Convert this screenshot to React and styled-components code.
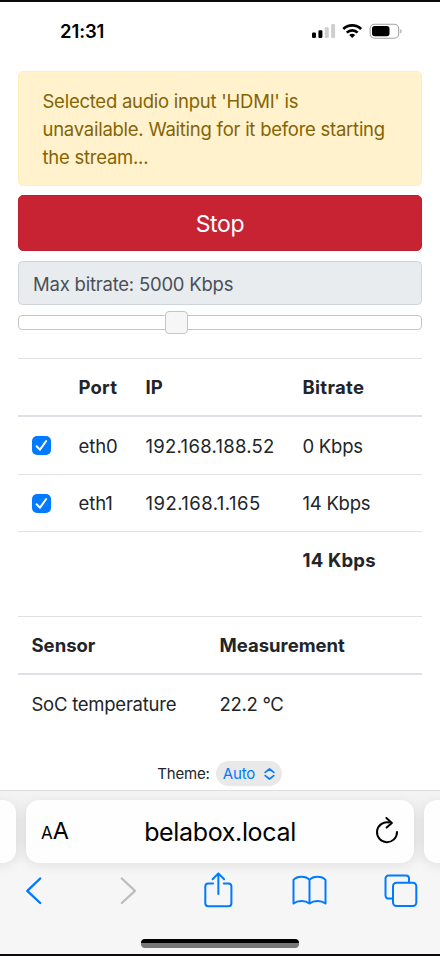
import React, { useState } from 'react'
import styled, { createGlobalStyle } from 'styled-components'

const GlobalStyle = createGlobalStyle`
    * {
        box-sizing: border-box;
    }

    body {
        margin: 0;
        background: #ffffff;
        color: #212529;
        font-family: Inter, "Liberation Sans", sans-serif;
        font-size: 18.5px;
        line-height: 28px;
    }
`

const Phone = styled.div`
    display: flex;
    flex-direction: column;
    width: 440px;
    height: 956px;
    overflow: hidden;
    background: #ffffff;
    border-top: 2px solid #0c0a0b;
    border-bottom: 2px solid #0c0a0b;
    white-space: nowrap;
`

const StatusBar = styled.header`
    display: flex;
    justify-content: space-between;
    align-items: flex-start;
    height: 69px;
    padding: 15px 37px 0 60px;
`

const Clock = styled.time`
    color: #000;
    font-size: 18.5px;
    font-weight: 600;
    letter-spacing: -0.1px;
`

const StatusIcons = styled.svg`
    display: block;
    width: 92px;
    height: 20px;
    margin-top: 5px;
`

const Page = styled.main`
    display: flex;
    flex-direction: column;
    height: 719px;
    padding: 0 18px;
`

const Alert = styled.div`
    height: 115px;
    padding: 15px 23.5px;
    background: #fff2cd;
    border: 1px solid #ffeeba;
    border-radius: 5px;
    color: #856404;
    letter-spacing: -0.25px;
    white-space: pre-line;
`

const StopButton = styled.button`
    height: 56px;
    margin-top: 9px;
    padding: 2px 0 0;
    background: #c82333;
    border: 1px solid #bd2130;
    border-radius: 5px;
    color: #ffffff;
    font: inherit;
    font-size: 23px;
    letter-spacing: -0.3px;
`

const BitrateField = styled.div`
    height: 44px;
    margin-top: 10px;
    padding: 8px 14px 6px;
    background: #e9ecef;
    border: 1px solid #ced4da;
    border-radius: 4.5px;
    color: #495057;
    letter-spacing: -0.22px;
`

const Slider = styled.div`
    display: flex;
    align-items: center;
    height: 15px;
    margin-top: 10px;
    padding-left: 146px;
    background: #ffffff;
    border: 1px solid #c5c5c5;
    border-radius: 4px;
`

const SliderHandle = styled.span`
    flex: none;
    width: 23px;
    height: 23px;
    margin-top: -1px;
    background: #f6f6f6;
    border: 1px solid #c5c5c5;
    border-radius: 4px;
`

const Table = styled.div`
    margin-top: 28px;
`

const Row = styled.div`
    display: grid;
    grid-template-columns: ${props => props.$columns};
    align-items: center;
    height: ${props => props.$head ? 59 : 57}px;
    padding-left: 13.5px;
    border-top: 1px solid #dee2e6;
    border-bottom: ${props => props.$head ? "2px solid #dee2e6" : "none"};
    font-weight: ${props => props.$head ? 650 : 400};

    ${props => props.$first && "border-top: none;"}
`

const Cell = styled.span`
    font-weight: ${props => props.$bold ? 650 : "inherit"};
    letter-spacing: ${props => props.$track || 0}px;
`

const Checkbox = styled.button`
    display: flex;
    align-items: center;
    justify-content: center;
    width: 19px;
    height: 19px;
    padding: 0;
    background: ${props => props.$checked ? "#007aff" : "#ffffff"};
    border: ${props => props.$checked ? "none" : "1px solid #c5c5c5"};
    border-radius: 5px;
`

const ThemePicker = styled.div`
    display: flex;
    align-items: center;
    justify-content: center;
    gap: 6px;
    height: 25px;
    margin-top: 29px;
    padding-right: 1px;
    font-size: 15px;
    line-height: 25px;
    letter-spacing: -0.15px;
`

const ThemeSelect = styled.span`
    display: flex;
    align-items: center;
    justify-content: space-between;
    width: 66px;
    height: 25px;
    padding: 0 7px;
    background: #e9e9ea;
    border-radius: 13px;
    color: #007aff;
`

const BrowserBar = styled.footer`
    flex: 1;
    background: #f6f6f6;
    border-top: 1px solid #dcdcdc;
`

const Tabs = styled.div`
    display: flex;
    justify-content: center;
    gap: 10px;
    height: 72px;
    padding-top: 9px;
    background: linear-gradient(#f4f4f4, #ececec 40%, #ececec 70%, #f4f4f4);
`

const Tab = styled.div`
    display: flex;
    flex: none;
    align-items: center;
    justify-content: space-between;
    width: 388px;
    height: 63px;
    padding: 0 15px;
    background: #fefefe;
    border-radius: 13px;
    box-shadow: 0 3px 12px rgba(0,0,0,0.08);
    color: #000;
`

const TextSize = styled.span`
    width: 24px;
    padding-top: 1px;
    font-size: 23.5px;

    small {
        font-size: 17px;
    }
`

const Address = styled.span`
    font-size: 25px;
    letter-spacing: -0.35px;
`

const ReloadIcon = styled.svg`
    display: block;
    width: 24px;
    height: 28px;
    margin-bottom: 4px;
    fill: none;
    stroke: #000;
    stroke-width: 2;
    stroke-linecap: round;
    stroke-linejoin: round;
`

const Nav = styled.nav`
    display: flex;
    justify-content: space-between;
    padding: 8px 21.5px 0 15.5px;
`

const NavIcon = styled.svg`
    display: block;
    width: 36px;
    height: 38px;
    fill: none;
    stroke: ${props => props.$disabled ? "#bdbdbf" : "#007aff"};
    stroke-width: ${props => props.$weight || 2};
    stroke-linecap: round;
    stroke-linejoin: round;
`

const HomeIndicator = styled.div`
    width: 158px;
    height: 9px;
    margin: 30px auto 0;
    background: linear-gradient(#000 50%, #777 50%);
    border-radius: 4px;
`

const portColumns = "47px 67px 157px 1fr"
const sensorColumns = "188px 1fr"

const ports = [
    { name: "eth0", ip: "192.168.188.52", bitrate: "0 Kbps", track: 0.27 },
    { name: "eth1", ip: "192.168.1.165", bitrate: "14 Kbps", track: 0.45 },
]

const PortRow = ({ port, first }) => {

    const [checked, setChecked] = useState(true)

    return (
        <Row $columns={portColumns} $first={first}>
            <Checkbox $checked={checked} aria-label={port.name} onClick={() => setChecked(!checked)}>
                {checked && (
                    <svg width="15" height="15" viewBox="0 0 15 15" fill="none" stroke="#fff" strokeWidth="2" strokeLinecap="round" strokeLinejoin="round">
                        <path d="M2.6 8.2 6 11.7 12.2 3" />
                    </svg>
                )}
            </Checkbox>
            <Cell $track={-0.1}>{port.name}</Cell>
            <Cell $track={port.track}>{port.ip}</Cell>
            <Cell $track={-0.25}>{port.bitrate}</Cell>
        </Row>
    )
}

const App = () => {
    return (
        <Phone>
            <GlobalStyle />
            <StatusBar>
                <Clock>21:31</Clock>
                <StatusIcons viewBox="311 22 92 20">
                    <rect x="312" y="32.5" width="4" height="5.5" rx="1.2" />
                    <rect x="318.4" y="30.3" width="4" height="7.7" rx="1.2" />
                    <rect x="324.8" y="27.3" width="4" height="10.7" rx="1.2" fill="#cfcfcf" />
                    <rect x="331.1" y="24" width="4" height="14" rx="1.2" fill="#cfcfcf" />
                    <g fill="none" stroke="#000" strokeWidth="2.7">
                        <path d="M343.3 29a12.7 12.7 0 0 1 17.8 0" />
                        <path d="M346.8 32.6a7.8 7.8 0 0 1 10.8 0" />
                    </g>
                    <path d="M349.2 35.1a4.4 4.4 0 0 1 6 0l-3 3z" />
                    <rect x="370.1" y="24.3" width="28.6" height="14" rx="4.5" fill="none" stroke="#a3a3a3" strokeWidth="1.1" />
                    <rect x="372" y="26" width="17.5" height="10.3" rx="2.8" />
                    <path d="M400.3 29v4.6c1.8-.8 1.8-3.8 0-4.6z" fill="#a3a3a3" />
                </StatusIcons>
            </StatusBar>

            <Page>
                <Alert>{"Selected audio input 'HDMI' is\nunavailable. Waiting for it before starting\nthe stream..."}</Alert>
                <StopButton>Stop</StopButton>
                <BitrateField>Max bitrate: 5000 Kbps</BitrateField>
                <Slider>
                    <SliderHandle />
                </Slider>

                <Table>
                    <Row $columns={portColumns} $head>
                        <span />
                        <Cell $track={0.2}>Port</Cell>
                        <Cell>IP</Cell>
                        <Cell $track={0.3}>Bitrate</Cell>
                    </Row>
                    {ports.map((port, i) => <PortRow key={port.name} port={port} first={i === 0} />)}
                    <Row $columns={portColumns}>
                        <span />
                        <span />
                        <span />
                        <Cell $bold $track={0.2}>14 Kbps</Cell>
                    </Row>
                </Table>

                <Table>
                    <Row $columns={sensorColumns} $head>
                        <Cell>Sensor</Cell>
                        <Cell>Measurement</Cell>
                    </Row>
                    <Row $columns={sensorColumns} $first>
                        <Cell $track={-0.25}>SoC temperature</Cell>
                        <Cell $track={-0.3}>22.2 °C</Cell>
                    </Row>
                </Table>

                <ThemePicker>
                    <span>Theme:</span>
                    <ThemeSelect>
                        Auto
                        <svg width="11" height="12" viewBox="0 0 11 12" fill="none" stroke="#007aff" strokeWidth="1.6" strokeLinecap="round" strokeLinejoin="round">
                            <path d="M1.2 4.4 5.5 1l4.3 3.4M1.2 7.6 5.5 11l4.3-3.4" />
                        </svg>
                    </ThemeSelect>
                </ThemePicker>
            </Page>

            <BrowserBar>
                <Tabs>
                    <Tab />
                    <Tab>
                        <TextSize><small>A</small>A</TextSize>
                        <Address>belabox.local</Address>
                        <ReloadIcon viewBox="0 0 24 28">
                            <path d="M14 6.4A10 10 0 1 0 22 16M11.4 2l5.5 4.9-5.3 4.7" />
                        </ReloadIcon>
                    </Tab>
                    <Tab />
                </Tabs>
                <Nav>
                    <NavIcon viewBox="0 0 36 38" $weight={2.4}>
                        <path d="M24.2 7.5 11.3 19.8l12.9 12.2" />
                    </NavIcon>
                    <NavIcon viewBox="0 0 36 38" $weight={2.3} $disabled>
                        <path d="M14.8 7.5 28 19.8 14.8 32" />
                    </NavIcon>
                    <NavIcon viewBox="0 0 36 38">
                        <path d="M14 12.4H9.3a3 3 0 0 0-3 3v16.8a3 3 0 0 0 3 3h20.1a3 3 0 0 0 3-3V15.4a3 3 0 0 0-3-3h-4.6M19.35 23V2.6M13.6 8.2l5.75-5.8 5.75 5.8" />
                    </NavIcon>
                    <NavIcon viewBox="0 0 36 38">
                        <path d="M18.5 8.8C14.7 4.6 6.3 4.6 2.5 8.8v23.7c4.2-3.4 11.8-3.4 16 0 4.2-3.4 11.8-3.4 16 0V8.8C30.7 4.6 22.3 4.6 18.5 8.8zV32.5" />
                    </NavIcon>
                    <NavIcon viewBox="0 0 36 38">
                        <rect x="10" y="11.7" width="23.3" height="23.3" rx="3.5" />
                        <path d="M9.700 27.6H5.5a3 3 0 0 1-3-3V7.6a3 3 0 0 1 3-3h17.5a3 3 0 0 1 3 3v3.600" />
                    </NavIcon>
                </Nav>
                <HomeIndicator />
            </BrowserBar>
        </Phone>
    )
}

export default App
